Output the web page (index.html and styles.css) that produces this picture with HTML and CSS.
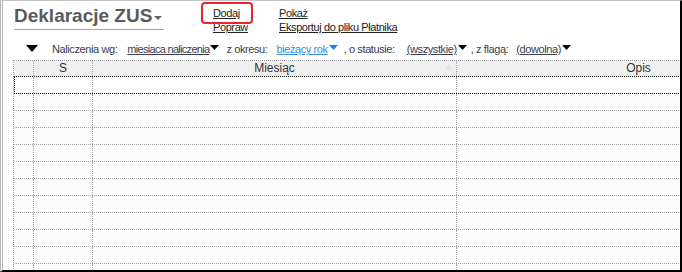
FILE: index.html
```html
<!DOCTYPE html>
<html lang="pl">
<head>
<meta charset="utf-8">
<title>Deklaracje ZUS</title>
<link rel="stylesheet" href="styles.css">
</head>
<body>
<div class="frame">
  <header class="top">
    <div class="title-cell">
      <h1 class="title">Deklaracje ZUS<svg class="title-arrow" width="8" height="4" viewBox="0 0 8 4"><path d="M0 0H8L4 4Z" fill="#666"/></svg></h1>
    </div>
    <div class="actions">
      <a class="act act-hl">Dodaj</a>
      <a class="act">Pokaż</a>
      <a class="act">Popraw</a>
      <a class="act">Eksportuj do pliku Płatnika</a>
    </div>
  </header>

  <div class="filters">
    <svg class="collapse" width="12" height="7" viewBox="0 0 12 7"><path d="M0 0H12L6 7Z" fill="#000"/></svg>
    <span class="lbl">Naliczenia wg:</span>
    <a class="dd f1">miesiaca naliczenia</a><svg class="tri" width="9" height="5" viewBox="0 0 9 5"><path d="M0 0H9L4.5 5Z" fill="#000"/></svg>
    <span class="lbl l2">z okresu:</span>
    <a class="dd blue f2">bieżący rok</a><svg class="tri" width="9" height="5" viewBox="0 0 9 5"><path d="M0 0H9L4.5 5Z" fill="#1e7fd8"/></svg>
    <span class="lbl l3">, o statusie:</span>
    <a class="dd f3">(wszystkie)</a><svg class="tri" width="9" height="5" viewBox="0 0 9 5"><path d="M0 0H9L4.5 5Z" fill="#000"/></svg>
    <span class="lbl l4">, z flagą:</span>
    <a class="dd f4">(dowolna)</a><svg class="tri" width="9" height="5" viewBox="0 0 9 5"><path d="M0 0H9L4.5 5Z" fill="#000"/></svg>
  </div>

  <div class="grid">
    <div class="row head">
      <div class="c c0"></div>
      <div class="c c1">S</div>
      <div class="c c2">Miesiąc<svg class="sort" width="7" height="6" viewBox="0 0 7 6"><path d="M3.5 0L7 6H0Z" fill="#e2e2e2"/></svg></div>
      <div class="c c3">Opis</div>
    </div>
    <div class="row sel"><div class="c c0"></div><div class="c c1"></div><div class="c c2"></div><div class="c c3"></div></div>
    <div class="row"><div class="c c0"></div><div class="c c1"></div><div class="c c2"></div><div class="c c3"></div></div>
    <div class="row"><div class="c c0"></div><div class="c c1"></div><div class="c c2"></div><div class="c c3"></div></div>
    <div class="row"><div class="c c0"></div><div class="c c1"></div><div class="c c2"></div><div class="c c3"></div></div>
    <div class="row"><div class="c c0"></div><div class="c c1"></div><div class="c c2"></div><div class="c c3"></div></div>
    <div class="row"><div class="c c0"></div><div class="c c1"></div><div class="c c2"></div><div class="c c3"></div></div>
    <div class="row"><div class="c c0"></div><div class="c c1"></div><div class="c c2"></div><div class="c c3"></div></div>
    <div class="row"><div class="c c0"></div><div class="c c1"></div><div class="c c2"></div><div class="c c3"></div></div>
    <div class="row"><div class="c c0"></div><div class="c c1"></div><div class="c c2"></div><div class="c c3"></div></div>
    <div class="row"><div class="c c0"></div><div class="c c1"></div><div class="c c2"></div><div class="c c3"></div></div>
    <div class="row"><div class="c c0"></div><div class="c c1"></div><div class="c c2"></div><div class="c c3"></div></div>
    <div class="row"><div class="c c0"></div><div class="c c1"></div><div class="c c2"></div><div class="c c3"></div></div>
  </div>
</div>
</body>
</html>
```

FILE: styles.css
```css
* { box-sizing: border-box; }
html, body { margin: 0; padding: 0; background: #fff; }
body {
  font-family: "Liberation Sans", Arial, sans-serif;
  font-size: 11px;
  letter-spacing: -0.4px;
  color: #333;
}
.frame {
  width: 682px;
  height: 272px;
  overflow: hidden;
  background: #fff;
  border-top: 1px solid #c4c4c4;
  border-left: 3px double #b4b4b4;
  border-right: 2px solid #000;
  border-bottom: 2px solid #000;
}
.top {
  display: grid;
  grid-template-columns: 199px 66px auto;
  padding-left: 11px;
  align-items: start;
}
.title-cell { padding-top: 4px; }
.title {
  margin: 0;
  display: inline-flex;
  align-items: center;
  font-size: 19px;
  letter-spacing: 0;
  line-height: 22px;
  font-weight: bold;
  color: #5a5a5a;
  padding-bottom: 2px;
  padding-right: 2px;
  border-bottom: 1px solid #a8a8a8;
}
.title-arrow { margin-left: 2px; margin-top: 3px; }
.actions {
  grid-column: 2 / 4;
  display: grid;
  grid-template-columns: 66px auto;
  line-height: 14px;
  padding-top: 5px;
}
.act {
  color: #222;
  text-decoration: underline;
  justify-self: start;
}
.act-hl { position: relative; }
.act-hl::after {
  content: "";
  position: absolute;
  left: -12px;
  top: -4px;
  width: 48px;
  height: 18px;
  border: 2px solid #e8262b;
  border-radius: 4px;
}
.filters {
  display: flex;
  align-items: center;
  margin-top: 8px;
  padding-left: 23px;
  line-height: 14px;
  height: 14px;
  white-space: nowrap;
  color: #3a3d4a;
}
.collapse { margin-right: 14px; margin-top: -2px; }
.dd { text-decoration: underline; color: #3a3d4a; }
.blue { color: #2f8ae0; }
.f1 { margin-left: 10px; letter-spacing: -0.7px; }
.tri { margin-left: 1px; margin-top: -3px; }
.lbl.l2 { margin-left: 7px; }
.f2 { margin-left: 9px; }
.lbl.l3 { margin-left: 6px; }
.f3 { margin-left: 12px; }
.lbl.l4 { margin-left: 4px; }
.f4 { margin-left: 8px; }

.grid {
  margin-top: 4px;
  margin-left: 10px;
  width: 808px;
  letter-spacing: 0;
  border-top: 1px dotted #9c9c9c;
  border-left: 1px dotted #9c9c9c;
}
.row {
  display: flex;
  height: 17px;
  border-bottom: 1px dotted #a4a4a4;
  background: #fcfcfc;
}
.row.head {
  height: 16px;
  background: #efefef;
  font-size: 12px;
  line-height: 15px;
  color: #333;
}
.c {
  flex: none;
  border-right: 1px dotted #a4a4a4;
  height: 100%;
  text-align: center;
  position: relative;
}
.c0 { width: 20px; }
.c1 { width: 59px; }
.c2 { width: 364px; }
.c3 { width: 364px; }
.sort { position: absolute; right: 4px; top: 3px; }
.row.sel { position: relative; background: #fff; }
.row.sel::after {
  content: "";
  position: absolute;
  left: 0;
  right: 0;
  top: -1px;
  bottom: -1px;
  border: 1px dotted #000;
}
```
